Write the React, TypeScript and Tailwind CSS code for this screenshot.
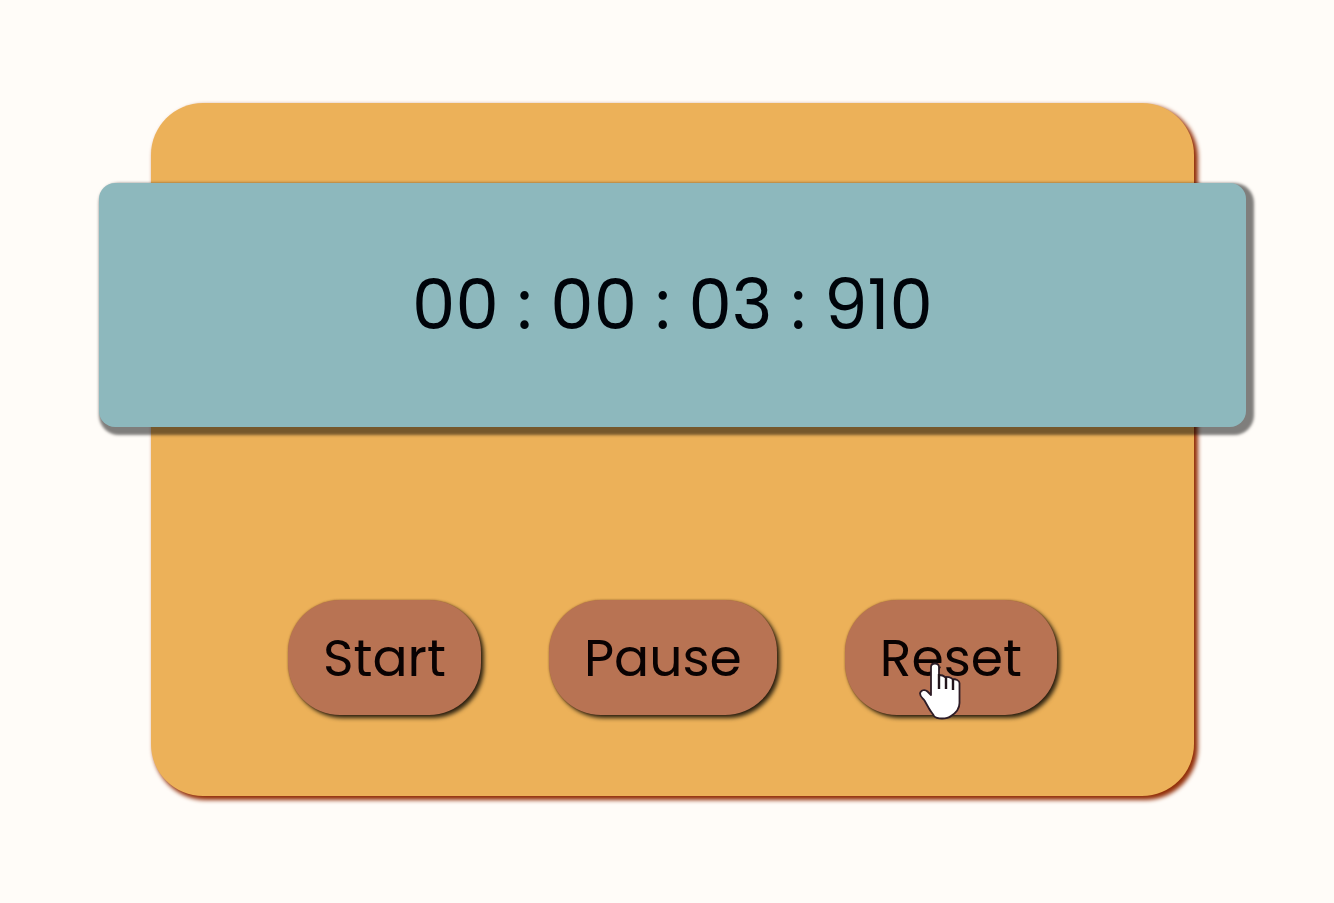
import type { ReactNode } from "react";

function HandCursor() {
  return (
    <svg
      viewBox="0 0 44 58"
      className="pointer-events-none absolute top-[62px] left-[73px] h-[58px] w-[44px]"
      aria-hidden="true"
    >
      <path
        d="M17 1.500C14.500 1.500 13 3 13 5V33L9.500 29.500C7 27 2.500 28 2 31.500C2 34.500 4.500 36 6.500 38.500L11 46.500C12.500 49.500 14.500 51 16 54Q18 56.500 24 56.500Q30 56.500 33 54C37 51.500 41.500 47 41.500 41V21C41.500 18.500 37.500 17 34.500 17C33 15 29 14.500 27 15C25.500 13.500 22.500 13 21 13V5C21 3 19.500 1.500 17 1.500Z"
        fill="#fff"
        stroke="#2d1c26"
        strokeWidth="1.800"
        strokeLinejoin="round"
      />
      <path
        d="M21 12V27M28 15V27M35 17V28"
        fill="none"
        stroke="#22151c"
        strokeWidth="2.400"
      />
    </svg>
  );
}

function TimerButton({ label, children }: { label: string; children?: ReactNode }) {
  return (
    <button
      type="button"
      className="relative flex h-[115px] cursor-pointer items-center rounded-[52px] bg-[#b87353] px-[35px] text-[52px] leading-none text-[#090202] shadow-[3px_3px_4px_rgba(0,0,0,0.8),0_0_2px_rgba(90,40,10,0.5)]"
    >
      {label}
      {children}
    </button>
  );
}

export default function App() {
  return (
    <main className="min-h-screen bg-[#fffcf8] pt-[103px] pr-[140px] pb-[100px] pl-[151px] font-['Poppins','Inter',sans-serif]">
      <section className="flex min-h-[693px] flex-col justify-between rounded-[52px] bg-[#ecb159] pt-20 pb-[81px] shadow-[3px_3px_4px_1px_#932f09]">
        <div className="-mx-[52px] flex h-[244px] items-center justify-center rounded-2xl bg-[#8db8bd] text-[69px] leading-none text-[#00040a] shadow-[4px_4px_3px_4px_rgba(0,0,0,0.5)]">
          <time className="whitespace-pre">00 : 00 : 03 : 910</time>
        </div>
        <div className="flex justify-center gap-[68px]">
          <TimerButton label="Start" />
          <TimerButton label="Pause" />
          <TimerButton label="Reset">
            <HandCursor />
          </TimerButton>
        </div>
      </section>
    </main>
  );
}
